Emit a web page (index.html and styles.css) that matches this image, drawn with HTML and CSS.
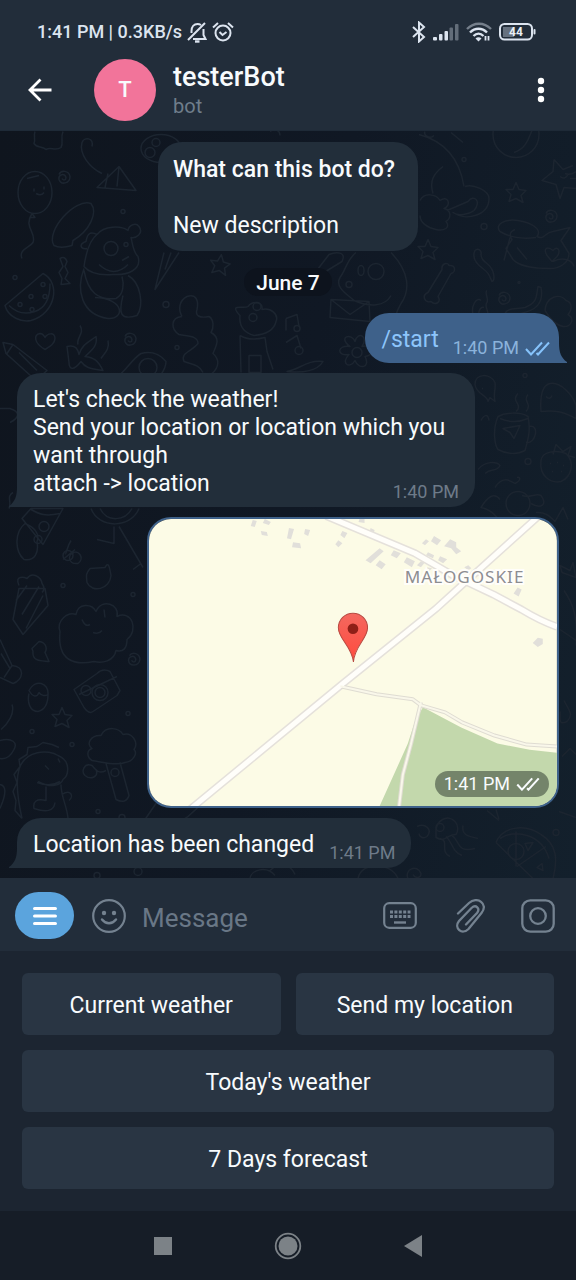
FILE: index.html
```html
<!DOCTYPE html>
<html lang="en">
<head>
<meta charset="utf-8">
<meta name="viewport" content="width=device-width, initial-scale=1">
<title>testerBot</title>
<link rel="stylesheet" href="styles.css">
</head>
<body>
<header class="top">
  <div class="status">
    <div class="status-left">
      <span class="status-text">1:41 PM | 0.3KB/s</span>
      <svg class="ic" width="20" height="22" viewBox="0 0 20 22" fill="none" stroke="currentColor" stroke-width="2"><path d="M1 19L18 2M4.500 12V10c0-4 2.500-7 6-7 1.500 0 2.500.4 3.500 1M16.500 8v6l2 4H6"/><path d="M8 20.500h4.500" stroke-width="2.400"/></svg>
      <svg class="ic" width="22" height="22" viewBox="0 0 22 22" fill="none" stroke="currentColor" stroke-width="2"><circle cx="11" cy="12" r="7.500"/><path d="M1 6.500L6 2M21 6.500L16 2M7.500 11l3 3 4-3"/></svg>
    </div>
    <div class="status-right">
      <svg class="ic" width="14" height="22" viewBox="0 0 14 22" fill="none" stroke="currentColor" stroke-width="2"><path d="M1 6l11 10-5 4.500V1.500L12 6 1 16"/></svg>
      <svg class="ic" width="26" height="18" viewBox="0 0 26 18" fill="currentColor"><rect y="14" width="4" height="3.500" rx="1"/><rect x="6" y="11" width="3.500" height="6.500" rx="1"/><rect x="11.500" y="8" width="3.500" height="9.500" rx="1"/><g opacity=".35"><rect x="16.500" y="4.500" width="3.500" height="13" rx="1"/><rect x="22" y="1" width="3.500" height="16.500" rx="1"/></g></svg>
      <svg class="ic" width="26" height="20" viewBox="0 0 26 20" fill="none" stroke="currentColor" stroke-width="2.400"><path d="M1 7C8 0 18 0 25 7" opacity=".45"/><path d="M4 10.500c5-5 12-5 17 0M7.500 14c3-3 7-3 10 0"/><path d="M9.500 16.500a4 4 0 0 1 6 0L12.500 19.500z" fill="currentColor" stroke="none"/><path d="M19.500 14v4.500M22.500 14v4.500" stroke-width="1.800"/></svg>
      <svg class="ic" width="37" height="18" viewBox="0 0 37 18" fill="none"><rect x="4" y="4" width="11" height="10" fill="#66717f"/><rect x="1" y="1" width="32" height="15.500" rx="4.500" stroke="currentColor" stroke-width="2"/><rect x="34.500" y="6" width="2" height="5.500" rx="1" fill="currentColor"/><text class="battery" x="17" y="13" text-anchor="middle">44</text></svg>
    </div>
  </div>
  <div class="bar">
    <button class="plain back" aria-label="Back"><svg width="24" height="24" viewBox="0 0 24 24" fill="none" stroke="#fff" stroke-width="2.800"><path d="M12.500 1.500L2 12l10.500 10.500M2 12h21.500"/></svg></button>
    <div class="avatar">T</div>
    <div class="who"><h1 class="name">testerBot</h1><p class="kind">bot</p></div>
    <button class="plain more" aria-label="More options"><svg width="8" height="26" viewBox="0 0 8 26" fill="#fff"><circle cx="4" cy="4" r="3.200"/><circle cx="4" cy="13" r="3.200"/><circle cx="4" cy="22" r="3.200"/></svg></button>
  </div>
</header>

<main class="chat">
  <svg class="wallpaper" viewBox="0 130 576 748" preserveAspectRatio="xMidYMid slice" aria-hidden="true">
    <defs>
      <path id="star" d="M0-10L3-3 10-2 5 3 7 10 0 6-7 9-5 2-10-3-3-3Z"/>
      <path id="spiral" d="M-5-2c2-5 10-4 11 2 0 7-9 9-11 3-1-5 6-7 7-2 0 3-3 3-4 1"/>
      <path id="heart" d="M0 8C-12 1-11-7-5-8c3 0 4 2 5 4 2-4 10-6 10 1C10 2 5 5 0 8Z"/>
      <path id="worm" d="M-10-15c-4 8 2 14 9 19 6 4 6 9 8 12 3-1 3-11-4-17-5-4-7-6-7-10 1-4-3-7-6-4Z"/>
    </defs>
    <g>
      <path d="M35 131c-2 5 1 8-1 12 3 5 8 2 12 6 5-3 9 2 15-2 3-5-1-9 2-16"/>
      <path d="M92 146c2-9-8-10-10-4-3 11 7 25 20 31M97 187l22-21 17 24ZM108 173l-3 14M119 166l-2 20"/>
      <ellipse cx="35" cy="192" rx="17" ry="21"/><path d="M27 178l12-3M34 188v3M44 186v3M36 193q5 3 8-1M32 213l-2 4h5l-3-4c-9 14 5 19 1 29-3 5-15 7-11 16"/>
      <path d="M54 245c-9-14 21-48 37-42 7 9-1 27-18 37l-1 5c-7 2-14 2-18 0Z"/>
      <path d="M97 234c-8-4-10 1-11 7-8 3-5 8 1 7M97 234c7-9 24-9 31-4 1-6 8-8 11-4 5 7-3 12-8 11 2 8 2 14 7 19 4 13-10 19-25 18-13 1-24-2-29-8 2-14 5-26 13-32Z"/>
      <circle cx="111" cy="248" r="7"/><circle cx="126" cy="244" r="2"/><path d="M99 264q15 14 29 0M122 260l7-4M84 268c-8 21-3 46 24 50 17 1 17-20-13-21M84 270c4 22 14 30 32 28 8-4 8-15 6-22M128 275c13 7 16 30 9 40-16 5-19-1-14-20"/>
      <path d="M5 305l38-32c18 9 13 40-12 47-9 2-23-3-26-15ZM9 305q11 11 26 6t15-28"/><circle cx="20" cy="304" r="2"/><circle cx="31" cy="296" r="2"/><circle cx="43" cy="284" r="2"/><circle cx="45" cy="296" r="2"/><circle cx="32" cy="309" r="2"/>
      <path d="M60 258q5-3 7 3l-2 5 3 6-3 6 5 5-9 1 1-6-3-6 4-6ZM3 342l10 2 34 26-11 10-30-27ZM13 344l-6 9M19 352l18 18"/>
      <use href="#heart" x="45" y="341"/><use href="#spiral" x="64" y="176"/><use href="#spiral" x="130" y="338"/>
      <path d="M80 325c5 8-4 12-2 19M67 346c9-2 11 3 12 8 3-10 9-12 17-18 2 10-5 14-11 20 9 1 13 4 18 14-14-2-18-3-22-9-7 9-12 9-12 1ZM108 340c2 9-4 13-7 18M120 374c8-7 13-16 21-21 12-3 19 1 25 8 0 6-3 10-5 13"/><circle cx="148" cy="367" r="9"/>
      <ellipse cx="161" cy="148" rx="20" ry="14"/><circle cx="150" cy="152" r="5"/><circle cx="156" cy="142" r="4"/>
      <path d="M164 252l-9 37 24-37M171 252l-6 17"/><use href="#star" x="220" y="264" transform="rotate(8 220 264)"/>
      <path d="M182 316c-4-7-3-16 5-20 9-3 12 4 10 13-2 6 2 9 12 7 5 3 5 11 2 16 11 6 4 15 2 21 7 6 6 14-1 20M182 316c-12 1-11 13-3 18 9 2 19 1 19 9-6 8-18 9-14 18 8 3 15 3 19 11"/>
      <path d="M240 315c-12-13 4-6 8-9 5-6 15-5 14 3 9-2 17 5 14 12-2 9-11 13-22 14-11-3-15-10-14-20ZM240 335c8 5 17 4 25 2l2 14 6 18M240 335l1 37M249 355h12v17h-12Z"/><circle cx="253" cy="317" r="4"/><circle cx="257" cy="306" r="4"/>
      <path d="M270 131c5-4 10-1 10 4M419 134c23 6 40 21 45 52M433 193c-4-13 1-20 10-27M425 131c-2 4 5 8 9 4M451 132l12 10"/>
      <path d="M420 200c4-8 16-7 20 0 8-6 12 5 4 8 8 2 7 10 2 13 5 6-2 10-10 8-9-2-16-7-16-14M447 210l21-9c6-8 14 0 6 9-5 4-16 6-21 2 13 9 36 3 36-14 0-8-16-15-24-12"/>
      <circle cx="516" cy="134" r="23"/><path d="M532 130c-3 6-5 18-18 22"/>
      <path d="M554 159l9 10 10-4M554 159l-1 12-11 9 14 4 4 14 4-11 12 1 6-10h-12M560 176q5 4 8-2M576 171q-6 4-11 2"/>
      <use href="#star" x="516" y="192"/><use href="#star" x="428" y="249"/><use href="#spiral" x="551" y="215"/><use href="#spiral" x="504" y="297"/><use href="#worm" x="485" y="265"/>
      <path d="M500 231c-6-7 5-13 18-11 12 2 25 8 19 16 8 4 7-4 16-5l17-4-9 13 8 13c0 10-10 15-19 15-13 0-31-2-37-9l-7-11 6-9c-3-5-2-8 3-10M500 231q15 9 36 6M510 237l-6 23M517 247l10 12M547 255c-4-7 0-10 6-5 5-6 8 1 4 6l-5 5ZM553 261c9-5 19-2 21 5"/>
      <path d="M442 269c-1-6 6-8 7-4 7-1 7 7 2 8l-13 23c4 6-3 9-7 5-6 2-10-6-3-9ZM538 286c-2 10 0 16-13 21-9 2-18 0-20 6h15c16-3 24-10 21-26ZM473 314c-2-8 3-18 8-14M479 315c-1-5 2-9 5-8M488 314c0-5-4-9-1-12 2-4-3-10 0-12"/>
      <path d="M316 271l13-17c7-3 18-3 13 7l-18 11ZM356 252c-9 7-10 17-16 25M391 252c19 20 19 38 10 51-4 8-5 9-4 13M340 277c-6 10 9 18 14 23 16 7 31 6 37-5M331 299l38 2 1 20-40-4ZM331 299l19 15 19-13"/><circle cx="376" cy="271" r="8"/><ellipse cx="361" cy="270" rx="3" ry="5"/><circle cx="349" cy="284" r="3"/>
      <path d="M286 318l11-4 2 12M286 318v12M286 342l11-7 4 13"/><circle cx="297" cy="328" r="3"/><circle cx="299" cy="350" r="4"/>
      <path d="M350 346c-13-10 2-14 5-5 3-11 14-5 7 5 11-3 14 9 3 10 6 11-6 14-10 4-5 9-15 3-6-6-13 2-12-10 1-8ZM545 310c1-14 15-18 21-10 7 2 6 10 2 14 8 5 2 13-5 12-5-1-11-4-18-16"/><circle cx="357" cy="352" r="5"/>
      <path d="M287 371c13-2 20-12 36-10-5 9-20 12-36 10Z"/>
      <path d="M0 408h10c12 4 8 10 0 14M9 508c3-7-3-12 4-16M22 518l9-10h32l-20 36ZM31 509c9 5 14 7 29 4M25 523c-10 8-11 27-1 36 11 2 15-7 13-18 3-7-2-14-12-18"/><circle cx="44" cy="526" r="5"/><circle cx="38" cy="539" r="4"/>
      <path d="M91 508c8 21 40 20 48 0M100 508c7 14 25 13 32 0M114 526v17l-17-4M119 526l24 41M133 569l8-6M63 559l12-10M71 540c-4 6-5 15-6 13M71 553c8-5 14 5 7 10-10 1-11-9-4-11"/><circle cx="68" cy="555" r="5"/>
      <path d="M90 568l15-1c3-5 4-4 6 8-1 14-19 18-24 7-1-8-1-9 3-14ZM19 585c-5-11 6-8 8-7 5-7 14-2 15 5 3 4 2 7 0 9M19 588l-6 31 10 15 25-29-3-17ZM22 614l17-28M16 600l11-15M26 628l17-33"/>
      <path d="M60 631c-4-11 8-20 16-17 2-12 16-11 20-3 6-14 24-7 21 5 15-7 22 14 10 23 0 9-4 13-11 11-2 11-14 13-22 11-19 4-37 0-34-30ZM82 619q3 8 8 5M104 609l1 8M93 632q6 2 9-2"/>
      <path d="M0 639l12 26-8 12M12 665c14 1 11 15 1 18l-13-6M1 653l9 15M32 648l7-7c8 1 8 8 6 11l4 9c-8-1-17 0-16-10ZM29 690c6-12 20-8 19 4-3 2-7 1-9-2-2 5-6 5-10-2ZM29 693c-2 9 1 18 9 18 8-2 10-9 10-17M74 689l23-16c4-4 9-4 13-2l10 19-3 5-24 16q-4 3-9-4ZM79 694l38-18"/><circle cx="86" cy="690" r="5"/><circle cx="100" cy="692" r="8"/><circle cx="100" cy="692" r="5"/>
      <use href="#spiral" x="134" y="658" transform="rotate(10 134 658)"/><use href="#star" x="62" y="717"/><path d="M12 704c3 9-4 19-11 25M0 740c12-3 18 2 14 9-3 6-8 10-14 9M0 784c6 1 7 8 0 24"/>
      <path d="M22 818l-7-8 1-10-3-9 4-9-3-8 6-8-1-7 8-5 1-7 9-1 6-4 9 2 7 3M22 818c-4-18-7-36-3-49 6-20 30-20 39-14 13 5 11 20 5 24-2 6-12 9-25 2M37 782c8 3 15 4 23-1M46 786v14q-14-3-12 8c12 4 20 3 21-6M61 784c0 13 6 21 7 34M62 794c9-6 12 2 7 6M45 765l4 4M58 758l2 4"/>
      <path d="M92 760c-5-3-6-10 0-12-7-5 0-14 9-13 5-10 18-8 22-1 9-3 16 8 11 15 4 4-1 12-9 13-9 4-24-1-33-2ZM106 763l10 36q10 5 13-4l-9-33M106 770c-7 4-10 0-14-5-8-3-11 6-7 10 6 5 14 1 11-6"/><circle cx="115" cy="772" r="4"/>
      <path d="M145 819l13-19M179 822c14-8 22-18 30-30M270 870c8-8 20-8 25 4M250 878c1-9 17-13 25-3"/>
      <path d="M475 384c0-11 15-12 20-2 1 8-2 10 0 19l-5-4-2 4c-1-7-12-7-13-17ZM482 388h1M516 411c8-7-6-10 2-18M526 411c7-8-4-10 2-17M498 416c-6 14-3 29 0 33 9 5 20 5 27 1 3-11 6-20 3-34-8-5-23-4-30 0ZM500 418q14 6 28 0M529 426c11-3 7 18-3 16M503 428l17-3-6 13-4-6ZM541 411c-1-14 0-26 9-28 11-2 23 12 26 22v13c-11-6-20-9-35-7ZM546 396q4 4 6-1"/>
      <path d="M541 460c1-9 15-11 25-7 9 9 6 23-5 28-10 2-22-5-20-21ZM553 454l3-10 7 7 8-5-3 9 7 2"/><path d="M550 463h1m6-1h1m5 3h1m-12 6h1m8 0h1"/>
      <path d="M478 469c7-9 19-8 22-4-3 7-9 2-15 8M495 487c7-11 14-8 20-4 7-4 5-7 2-6M500 499c-6-8-13-2-19 8 6 1 12 5 16 10M522 495c8 3 14-3 19 0 7 9 0 14-10 8M536 512c9-1 14 4 19 9l8-14 5 12M489 420c-1-7-5-6-8 0"/><circle cx="518" cy="503" r="12"/>
      <path d="M560 565l10 5 3-8 3 15-14-5ZM564 590c9 13 14 26 12 55M560 629l16 11M564 700c5 10 10 14 3 21-10 5-6-5-7-10M562 756l8-8 6 6M559 811l17 6"/>
      <path d="M436 832c-1-12 12-19 19-11 4 4 3 10 1 13-9-1-10 9-20 3ZM440 838c10 2-1 13 10 18M446 836c7 6 5 14 16 19M452 835c8 5 4 18 23 13M463 825c-2 11 8 11 15 13"/><circle cx="440" cy="827" r="4"/>
      <path d="M496 842c6-15 28-20 45-8 16 10 17 25 12 44h-13M496 842l37 36M500 838c16-10 42-4 49 20M516 831v35M517 866l29-20M525 843l8-1-5 8ZM537 867l5-4 1 7Z"/><circle cx="516" cy="851" r="8"/>
      <path d="M358 878c3-17 33-17 40 0M408 878c-4-9 9-15 13-5 0 5-6 5-8 1M417 826c8-4 16 3 10 10-4 3-8 0-8-3M487 810l12 10M496 809l3 10"/>
      <g class="dots"><circle cx="15" cy="277" r="2"/><circle cx="123" cy="211" r="2"/><circle cx="166" cy="304" r="3"/><circle cx="177" cy="347" r="2"/><circle cx="484" cy="226" r="3"/><circle cx="464" cy="159" r="2"/><circle cx="519" cy="282" r="1"/><circle cx="525" cy="375" r="2"/><circle cx="528" cy="461" r="3"/><circle cx="63" cy="585" r="2"/><circle cx="133" cy="594" r="2"/><circle cx="128" cy="713" r="2"/><circle cx="32" cy="731" r="2"/><circle cx="72" cy="744" r="2"/><circle cx="98" cy="811" r="2"/><circle cx="97" cy="875" r="3"/><circle cx="556" cy="832" r="3"/><circle cx="138" cy="871" r="4"/><circle cx="122" cy="817" r="3"/></g>
    </g>
  </svg>

  <section class="bubble intro">
    <h2 class="intro-title">What can this bot do?</h2>
    <p>New description</p>
  </section>
  <div class="date">June 7</div>

  <article class="bubble out">
    <a class="command" href="#start">/start</a>
    <span class="meta">1:40 PM <svg width="25" height="15" viewBox="0 0 25 15" fill="none" stroke="currentColor" stroke-width="2"><path d="M1 8l5 5.500L17 1.500M11.500 12l1.500 1.500L24 1.500"/></svg></span>
    <svg class="tail tail-out" width="8" height="20" viewBox="0 0 8 20" aria-hidden="true"><path d="M0 0c0 9 2 15 8 19v1H0z" fill="#3e618a"/></svg>
  </article>

  <article class="bubble in long">
    <p class="body">Let's check the weather!<br>Send your location or location which you want through<br>attach -&gt; location</p>
    <span class="meta">1:40 PM</span>
    <svg class="tail tail-in" width="8" height="20" viewBox="0 0 8 20" aria-hidden="true"><path d="M8 0c0 9-2 15-8 19v1h8z" fill="#222e3a"/></svg>
  </article>

  <article class="place">
    <svg class="map" viewBox="0 0 405 285" preserveAspectRatio="xMidYMid slice" role="img" aria-label="Map near Małogoskie">
      <defs><linearGradient id="pin" x1="0" y1="0" x2="0" y2="1"><stop offset="0" stop-color="#f4685f"/><stop offset="1" stop-color="#ff4a3d"/></linearGradient></defs>
      <rect width="405" height="285" fill="#fcfbe6"/>
      <path d="M272 187l38 20 36 16 32 6 27 3v53H229l28-62 7-22z" fill="#c3d8ac"/>
      <g fill="#e1dfda"><path d="M103 1l4 1-2 6-4-1zM115 0l6 3-2 3-6-2zM111 12l6 1 1 4-6-1zM139 9l5 1-3 10-4-1zM155 10l5 1-2 6-4-2zM143 23l7 1 1 5-9-1zM192 12l5 2-3 5-4-3zM188 21l4 3-4 4-3-3zM229 29l4 3-13 12-5-3zM243 31l7 3-4 5-6-3zM229 41l6 4-4 5-6-4zM256 38l8 4-3 6-8-5zM220 9l4 2-1 4-4-2zM209 0h5v4l-6-1zM283 17l7 4-4 5-6-4zM275 20l3 2-4 4-3-2zM299 20l6 3v5l5 4-5 3-5-6-7-2zM277 33l6 3-1 3-7-3zM289 37l7 3-4 4-5-3zM270 42l4 1-4 5-4-2zM317 46l3 3-3 2-4-3zM276 48l5 1-4 4zM366 68l4 2-3 7-5-3zM386 118l5 1v5l-5 3-5-4z"/></g>
      <g fill="none" stroke-linejoin="round">
        <g stroke="#e5e1db" stroke-width="8"><path d="M176-3l88 37 38 22 40 19 28 15q18 11 35 17"/><path d="M40 289L193 163 285 89 307 69 387-3"/></g>
        <g stroke="#dfdcd2" stroke-width="4"><path d="M190 166l36 8 36 5 8 6 24 7 17 10 32 13 32 9 30 2"/><path d="M270 182l-10 42-8 30-4 34"/></g>
        <g stroke="#fffefa" stroke-width="5"><path d="M176-3l88 37 38 22 40 19 28 15q18 11 35 17"/><path d="M40 289L193 163 285 89 307 69 387-3"/></g>
        <g stroke="#f9f7ea" stroke-width="2"><path d="M190 166l36 8 36 5 8 6 24 7 17 10 32 13 32 9 30 2"/><path d="M270 182l-10 42-8 30-4 34"/></g>
      </g>
      <text class="town" x="254" y="64">MAŁOGOSKIE</text>
      <path d="M203 142C201 126 188 119 188 108A14.500 14.500 0 0 1 217 108C217 119 204 126 203 142Z" fill="url(#pin)" stroke="#b84a42"/>
      <circle cx="202.500" cy="109" r="5.300" fill="#8f1f17"/>
    </svg>
    <span class="stamp">1:41 PM <svg width="24" height="14" viewBox="0 0 25 15" fill="none" stroke="currentColor" stroke-width="2.200"><path d="M1 8l5 5.500L17 1.500M11.500 12l1.500 1.500L24 1.500"/></svg></span>
  </article>

  <article class="bubble in">
    <p class="body">Location has been changed</p>
    <span class="meta">1:41 PM</span>
    <svg class="tail tail-in" width="8" height="20" viewBox="0 0 8 20" aria-hidden="true"><path d="M8 0c0 9-2 15-8 19v1h8z" fill="#222e3a"/></svg>
  </article>
</main>

<form class="composer">
  <button type="button" class="menu" aria-label="Bot menu"><svg width="24" height="20" viewBox="0 0 24 20" stroke="#fff" stroke-width="3.200" stroke-linecap="round"><path d="M1.600 2.500h20.800M1.600 10h20.800M1.600 17.500h20.800"/></svg></button>
  <button type="button" class="plain" aria-label="Emoji"><svg width="34" height="34" viewBox="0 0 34 34" fill="none" stroke="currentColor" stroke-width="2.200"><circle cx="17" cy="17" r="15.800"/><path d="M10 20.500c4 5 10 5 14 0" stroke-linecap="round" stroke-width="2.400"/><g fill="currentColor" stroke="none"><circle cx="12" cy="14" r="2.200"/><circle cx="22" cy="14" r="2.200"/></g></svg></button>
  <input class="field" type="text" placeholder="Message" aria-label="Message">
  <div class="tools">
    <button type="button" class="plain" aria-label="Keyboard"><svg width="34" height="34" viewBox="0 0 34 34" fill="none" stroke="currentColor" stroke-width="2.200"><rect x="1.200" y="4.200" width="31.600" height="24.600" rx="5"/><path d="M7 13h20.500M7 17.500h20.500" stroke-width="3" stroke-dasharray="3 1.400"/><path d="M11 23.500h12" stroke-width="2.400"/></svg></button>
    <button type="button" class="plain" aria-label="Attach"><svg width="34" height="34" viewBox="-3 0 34 34" fill="none" stroke="currentColor" stroke-width="2.300" stroke-linecap="round"><path d="M3 14.500L14 4C22-3.500 34 5 26.500 14L13.500 30C7 36.500-1.500 29 4 22L16.500 9C21 5 25.500 9.500 22 14L11 25.500"/></svg></button>
    <button type="button" class="plain" aria-label="Camera"><svg width="34" height="34" viewBox="0 0 34 34" fill="none" stroke="currentColor" stroke-width="2.300"><rect x="1.300" y="1.300" width="31.400" height="31.400" rx="8"/><circle cx="17" cy="17" r="7.800"/></svg></button>
  </div>
</form>

<section class="keys">
  <button class="key">Current weather</button>
  <button class="key">Send my location</button>
  <button class="key wide">Today's weather</button>
  <button class="key wide">7 Days forecast</button>
</section>

<nav class="system">
  <button class="plain" aria-label="Recent apps"><svg width="18" height="18"><rect width="18" height="18" fill="currentColor"/></svg></button>
  <button class="plain" aria-label="Home"><svg width="28" height="28" viewBox="0 0 28 28"><circle cx="14" cy="14" r="12.300" fill="none" stroke="currentColor" stroke-width="1.800"/><circle cx="14" cy="14" r="9.500" fill="currentColor"/></svg></button>
  <button class="plain" aria-label="Back"><svg width="18" height="22" viewBox="0 0 18 22"><path d="M0 11L18 0v22z" fill="currentColor"/></svg></button>
</nav>
</body>
</html>
```

FILE: styles.css
```css
* { box-sizing: border-box; }

body {
  margin: 0;
  min-height: 100vh;
  display: flex;
  flex-direction: column;
  background: #161d27;
  color: #f8fbfd;
  font-family: Roboto, "Liberation Sans", sans-serif;
  font-size: 23px;
  line-height: 28px;
}

h1, h2, p { margin: 0; }
svg { display: block; flex: none; }

.plain {
  display: flex;
  align-items: center;
  justify-content: center;
  padding: 0;
  border: 0;
  background: none;
  color: inherit;
}

/* Header */
.top { background: #222d3a; padding-bottom: 9px; }
.status {
  display: flex;
  justify-content: space-between;
  align-items: center;
  padding: 20px 40px 0 37px;
  color: #dce4ef;
}
.status-left, .status-right { display: flex; align-items: center; height: 24px; }
.status-left { gap: 5px; }
.status-right { gap: 7px; }
.status-text { font-size: 18px; font-weight: 500; line-height: 24px; }
.battery { font-size: 12px; font-weight: 700; fill: #e8eef5; }
.bar {
  display: flex;
  align-items: center;
  padding: 15px 31px 0 28px;
}
.avatar {
  display: grid;
  place-items: center;
  width: 62px;
  height: 62px;
  margin: 0 17px 0 42px;
  border-radius: 50%;
  background: #f2749a;
  font-size: 22px;
  font-weight: 500;
}
.who { flex: 1; padding-top: 2px; }
.name { font-size: 27px; font-weight: 500; line-height: 30px; }
.kind { color: #6f7d8b; font-size: 20px; }

/* Conversation */
.chat {
  position: relative;
  isolation: isolate;
  flex: 1;
  display: flex;
  flex-direction: column;
  gap: 10px;
  padding: 11px 17px 9px;
  border-top: 1px solid #1e2a37;
  background: linear-gradient(100deg, #0f151e, #101824 50%, #13202c);
}
.wallpaper {
  position: absolute;
  inset: 0;
  z-index: -1;
  width: 100%;
  height: 100%;
  fill: none;
  stroke: #1c2530;
  stroke-width: 1.5;
  stroke-linejoin: round;
}
.bubble {
  position: relative;
  display: flex;
  padding: 13px 16px 9px;
  border-radius: 24px;
}
.intro {
  align-self: center;
  flex-direction: column;
  gap: 28px;
  padding: 14px 23px 11px 15px;
  background: #222e3a;
}
.intro-title { font-size: 23px; font-weight: 500; line-height: 28px; }
.date {
  align-self: center;
  margin: 7px 0;
  padding: 3px 12px 0;
  border-radius: 16px;
  background: #0d131d;
  font-size: 21px;
  font-weight: 500;
  line-height: 25px;
}
.in {
  align-self: flex-start;
  max-width: calc(100% - 84px);
  border-bottom-left-radius: 0;
  background: #222e3a;
}
.out {
  align-self: flex-end;
  gap: 14px;
  padding-right: 9px;
  border-bottom-right-radius: 0;
  background: #3e618a;
}
.long { flex-direction: column; }
.command { color: #8dc5fb; text-decoration: none; }
.meta {
  display: flex;
  align-items: center;
  gap: 6px;
  align-self: flex-end;
  flex: none;
  margin-bottom: -7px;
  color: #6e7b89;
  font-size: 18px;
  line-height: 26px;
}
.out .meta { color: #8bb3dc; }
.out .meta svg { color: #86c3fb; }
.in .meta { margin-left: 15px; }
.long .meta { margin-top: -19px; }
.tail { position: absolute; bottom: 0; }
.tail-in { left: -8px; }
.tail-out { right: -8px; }

.place {
  position: relative;
  align-self: flex-end;
  width: 76%;
  overflow: hidden;
  border: 2px solid #3e618a;
  border-radius: 24px;
}
.map { width: 100%; height: auto; }
.town {
  font-family: "Noto Sans", sans-serif;
  font-size: 17px;
  letter-spacing: 1px;
  fill: #8d8d91;
  stroke: #fffefa;
  stroke-width: 4px;
  paint-order: stroke;
}
.stamp {
  position: absolute;
  right: 8px;
  bottom: 9px;
  display: flex;
  align-items: center;
  gap: 6px;
  padding: 0 9px;
  border-radius: 13px;
  background: #74846a;
  font-size: 18px;
  line-height: 26px;
}

/* Message input */
.composer {
  display: flex;
  align-items: center;
  padding: 14px 21px 12px 15px;
  background: #222d3a;
  color: #748290;
}
.menu {
  display: grid;
  place-items: center;
  width: 59px;
  height: 47px;
  margin-right: 18px;
  padding: 0;
  border: 0;
  border-radius: 24px;
  background: #5ba4dd;
}
.field {
  flex: 1;
  min-width: 0;
  margin-left: 16px;
  padding: 4px 0 0;
  border: 0;
  outline: 0;
  background: none;
  color: #f8fbfd;
  font: inherit;
  font-size: 26px;
  line-height: 32px;
}
.field::placeholder { color: #697786; opacity: 1; }
.tools { display: flex; gap: 35px; }

/* Reply keyboard */
.keys {
  display: grid;
  grid-template-columns: 1fr 1fr;
  gap: 15px;
  padding: 22px;
  background: #1c2531;
}
.key {
  height: 62px;
  padding: 4px 12px 0;
  border: 0;
  border-radius: 6px;
  background: #293543;
  color: #f8fbfd;
  font: inherit;
}
.wide { grid-column: 1 / -1; }

/* System navigation */
.system {
  display: flex;
  justify-content: center;
  gap: 65px;
  height: 69px;
  background: #161d27;
  color: #7c8287;
}
.system .plain { width: 60px; }
```
